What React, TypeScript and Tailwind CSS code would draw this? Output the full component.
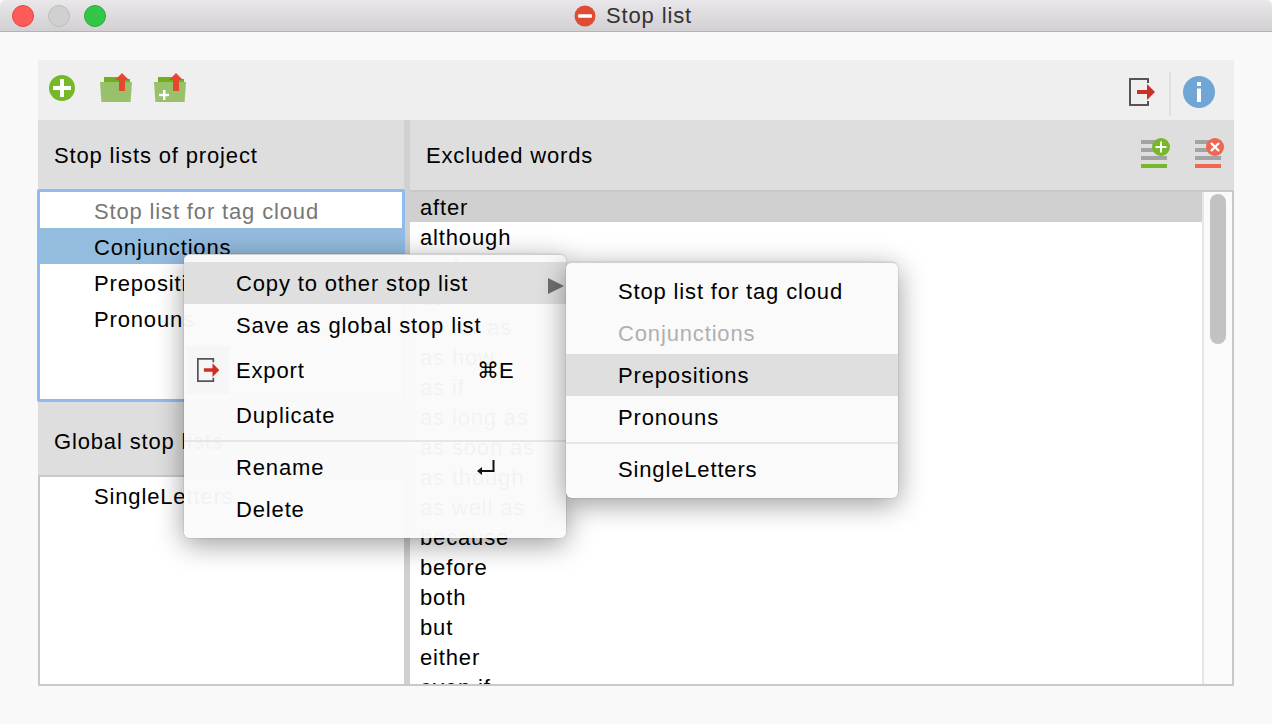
import React from "react";

function PlusCircle() {
  return (
    <svg width="28" height="28" viewBox="0 0 28 28">
      <circle cx="14" cy="14" r="13" fill="#76b82a" />
      <rect x="12" y="5" width="4" height="18" fill="#fff" />
      <rect x="5" y="12" width="18" height="4" fill="#fff" />
    </svg>
  );
}

function FolderUp({ plus }: { plus?: boolean }) {
  return (
    <svg width="32" height="30" viewBox="0 0 32 30">
      <path d="M4 4h16v5H4z" fill="#70b01d" />
      <path d="M20 6h10v3H20z" fill="#70b01d" />
      <path d="M0 9h32l-1.4 20H1.4z" fill="#99c16b" />
      <path d="M22 0l7 7h-4v11h-6V7h-4z" fill="#e2492f" />
      {plus && (
        <>
          <rect x="9" y="17" width="2.4" height="10" fill="#fff" />
          <rect x="5" y="20.8" width="10" height="2.4" fill="#fff" />
        </>
      )}
    </svg>
  );
}

function ExportIcon({ scale = 1 }: { scale?: number }) {
  return (
    <svg width={26 * scale} height={28 * scale} viewBox="0 0 26 28">
      <path d="M19 5V1H1v26h18v-4" fill="none" stroke="#555" strokeWidth="2" />
      <path d="M8 12h10V6l8 8-8 8v-6H8z" fill="#cd2f24" />
    </svg>
  );
}

function InfoIcon() {
  return (
    <svg width="32" height="32" viewBox="0 0 32 32">
      <circle cx="16" cy="16" r="16" fill="#6fa6d6" />
      <rect x="14" y="6" width="4" height="4" fill="#fff" />
      <rect x="14" y="12.5" width="4" height="13.5" fill="#fff" />
    </svg>
  );
}

function ListAdd() {
  return (
    <svg width="30" height="30" viewBox="0 0 30 30">
      <rect x="0" y="2" width="26" height="4" fill="#a3a3a3" />
      <rect x="0" y="10" width="26" height="4" fill="#a3a3a3" />
      <rect x="0" y="18" width="26" height="4" fill="#a3a3a3" />
      <rect x="0" y="26" width="26" height="4" fill="#76b82a" />
      <circle cx="20" cy="9" r="9" fill="#76b82a" />
      <rect x="19" y="3.5" width="2" height="11" fill="#fff" />
      <rect x="14.5" y="8" width="11" height="2" fill="#fff" />
    </svg>
  );
}

function ListRemove() {
  return (
    <svg width="30" height="30" viewBox="0 0 30 30">
      <rect x="0" y="2" width="26" height="4" fill="#a3a3a3" />
      <rect x="0" y="10" width="26" height="4" fill="#a3a3a3" />
      <rect x="0" y="18" width="26" height="4" fill="#a3a3a3" />
      <rect x="0" y="26" width="26" height="4" fill="#ee6750" />
      <circle cx="20" cy="9" r="9" fill="#ee6750" />
      <path d="M16 5l8 8M24 5l-8 8" stroke="#fff" strokeWidth="2.4" />
    </svg>
  );
}

function ReturnIcon() {
  return (
    <svg width="18" height="15" viewBox="0 0 18 15">
      <path d="M16.5 0v11H3" fill="none" stroke="#111" strokeWidth="2" />
      <path d="M0 11l5-4v8z" fill="#111" />
    </svg>
  );
}

const words = [
  "after", "although", "and", "as", "as far as", "as how", "as if", "as long as",
  "as soon as", "as though", "as well as", "because", "before", "both", "but", "either", "even if",
];

function ListRow({ label, muted, selected }: { label: string; muted?: boolean; selected?: boolean }) {
  return (
    <div className={`h-[36px] pt-[2px] flex items-center pl-[54px] ${selected ? "bg-[#94bcdf]" : ""} ${muted ? "text-[#777777]" : "text-black"}`}>
      {label}
    </div>
  );
}

function MenuItem({ label, h, hl, shortcut, arrow, icon, dim }: {
  label: string; h: string; hl?: boolean; shortcut?: React.ReactNode; arrow?: boolean; icon?: boolean; dim?: boolean;
}) {
  return (
    <div className={`${h} pl-[52px] flex items-center relative ${hl ? "bg-[#dfdfdf]" : ""} ${dim ? "text-[#b0b0b0]" : "text-black"}`}>
      {icon && (
        <span className="absolute left-[3px] top-0 bottom-0 w-[42px] bg-[#f6f6f6] flex items-center justify-center">
          <ExportIcon scale={0.86} />
        </span>
      )}
      <span>{label}</span>
      {shortcut && <span className="absolute left-[293px] tracking-normal">{shortcut}</span>}
      {arrow && (
        <svg className="absolute left-[364px] top-[16px]" width="16" height="16" viewBox="0 0 16 16">
          <path d="M0 0l16 8-16 8z" fill="#6e6e6e" />
        </svg>
      )}
    </div>
  );
}

export default function App() {
  return (
    <div className="relative w-[1272px] h-[724px] overflow-hidden flex flex-col bg-[#f9f9f9] text-[22px] tracking-[0.85px] text-black font-['Liberation_Sans',Arial,sans-serif]">
      <div className="relative h-[32px] shrink-0 rounded-t-[6px] flex items-center justify-center bg-gradient-to-b from-[#e9e7e9] to-[#d2d0d2] border-b border-[#b4b4b4]">
        <div className="absolute left-[12px] top-[5px] flex gap-[14px]">
          <span className="w-[22px] h-[22px] rounded-full bg-[#fc5b57] border border-[#e5453f]" />
          <span className="w-[22px] h-[22px] rounded-full bg-[#d0d0d0] border border-[#bdbdbd]" />
          <span className="w-[22px] h-[22px] rounded-full bg-[#33c748] border border-[#27aa35]" />
        </div>
        <div className="flex items-center gap-[10px] text-[#333333] mr-[6px]">
          <svg width="22" height="22" viewBox="0 0 22 22">
            <circle cx="11" cy="11" r="10.5" fill="#e04b33" />
            <rect x="4" y="9.2" width="14" height="3.6" rx="1" fill="#fff" />
          </svg>
          <span>Stop list</span>
        </div>
      </div>

      <div className="flex-1 min-h-0 flex flex-col pt-[28px] px-[38px] pb-[38px]">
        <div className="h-[60px] shrink-0 bg-[#efefef] flex items-center pl-[10px] pr-[19px]">
          <span className="-mt-[4px]"><PlusCircle /></span>
          <span className="ml-[24px] -mt-[4px]"><FolderUp /></span>
          <span className="ml-[22px] -mt-[4px]"><FolderUp plus /></span>
          <span className="ml-auto mt-[4px]"><ExportIcon /></span>
          <span className="ml-[14px] w-[2px] h-[44px] mt-[8px] bg-[#e0e0e0]" />
          <span className="ml-[12px] mt-[4px]"><InfoIcon /></span>
        </div>

        <div className="flex-1 min-h-0 flex border-b-2 border-[#c9c9c9]">
          <div className="w-[366px] shrink-0 flex flex-col">
            <div className="h-[69px] shrink-0 bg-[#dedede] flex items-center pl-[16px] pt-[2px]">Stop lists of project</div>
            <div className="h-[213px] shrink-0 -ml-[1px] -mr-[1px] bg-white border-[3px] border-[#8fbcec] rounded-[2px] relative z-0">
              <ListRow label="Stop list for tag cloud" muted />
              <ListRow label="Conjunctions" selected />
              <ListRow label="Prepositions" />
              <ListRow label="Pronouns" />
            </div>
            <div className="h-[75px] shrink-0 bg-[#dedede] flex items-center pl-[16px] pt-[6px] border-b-2 border-[#c9c9c9]">Global stop lists</div>
            <div className="flex-1 min-h-0 bg-white border-l-2 border-[#c9c9c9] pt-[1px]">
              <div className="h-[36px] flex items-center pl-[54px]">SingleLetters</div>
            </div>
          </div>

          <div className="w-[6px] shrink-0 bg-[#d0d0d0]" />

          <div className="flex-1 min-w-0 flex flex-col">
            <div className="h-[72px] shrink-0 bg-[#dedede] border-b-2 border-[#c9c9c9] flex items-center pl-[16px] pr-[9px]">
              <span>Excluded words</span>
              <span className="ml-auto -mt-[4px]"><ListAdd /></span>
              <span className="ml-[24px] -mt-[4px]"><ListRemove /></span>
            </div>
            <div className="flex-1 min-h-0 flex bg-white border-r-2 border-[#c9c9c9]">
              <div className="flex-1 min-w-0 overflow-hidden">
                {words.map((w, i) => (
                  <div key={w} className={`h-[30px] shrink-0 flex items-center pl-[10px] ${i === 0 ? "bg-[#d0d0d0]" : ""}`}>{w}</div>
                ))}
              </div>
              <div className="w-[30px] shrink-0 bg-[#fafafa] border-l-2 border-[#e6e6e6] pl-[6px] pt-[2px]">
                <div className="w-[16px] h-[150px] rounded-full bg-[#c2c2c2]" />
              </div>
            </div>
          </div>
        </div>
      </div>

      <div className="absolute left-[184px] top-[254px] w-[382px] h-[284px] pt-[7px] rounded-[6px] bg-[#fafafa]/[0.97] border-t border-[#d0d0d0] shadow-[0_0_0_1px_rgba(0,0,0,0.06),0_6px_28px_rgba(0,0,0,0.4)]">
        <MenuItem h="h-[42px]" label="Copy to other stop list" hl arrow />
        <MenuItem h="h-[42px]" label="Save as global stop list" />
        <MenuItem h="h-[48px]" label="Export" icon shortcut="⌘E" />
        <MenuItem h="h-[43px]" label="Duplicate" />
        <div className="h-[2px] mt-[3px] mb-[4px] bg-[#e6e6e6]" />
        <MenuItem h="h-[42px]" label="Rename" shortcut={<ReturnIcon />} />
        <MenuItem h="h-[42px]" label="Delete" />
      </div>

      <div className="absolute left-[566px] top-[262px] w-[332px] h-[236px] pt-[7px] rounded-[6px] bg-[#fafafa] border-t border-[#d0d0d0] shadow-[0_0_0_1px_rgba(0,0,0,0.06),0_6px_28px_rgba(0,0,0,0.4)]">
        <MenuItem h="h-[42px]" label="Stop list for tag cloud" />
        <MenuItem h="h-[42px]" label="Conjunctions" dim />
        <MenuItem h="h-[42px]" label="Prepositions" hl />
        <MenuItem h="h-[42px]" label="Pronouns" />
        <div className="h-[2px] my-[4px] bg-[#e6e6e6]" />
        <MenuItem h="h-[42px]" label="SingleLetters" />
      </div>
    </div>
  );
}
